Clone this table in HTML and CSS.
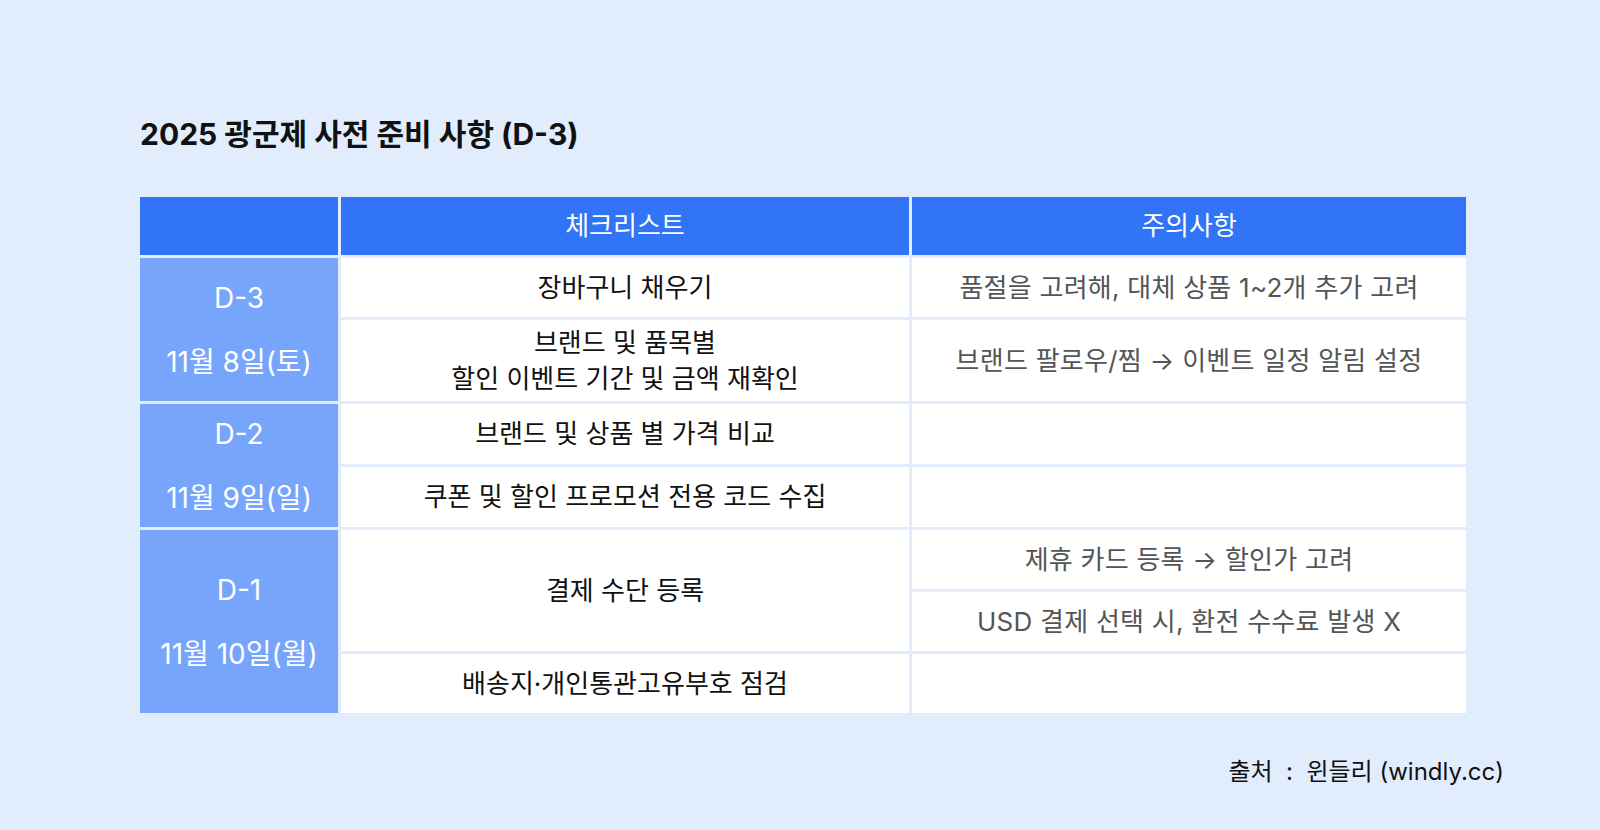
FILE: index.html
```html
<!DOCTYPE html>
<html lang="ko">
<head>
<meta charset="utf-8">
<title>2025 광군제 사전 준비 사항 (D-3)</title>
<link rel="stylesheet" href="styles.css">
</head>
<body>
<main class="page">
  <h1 class="title">2025 광군제 사전 준비 사항 (D-3)</h1>
  <div class="table">
    <div class="cell head"></div>
    <div class="cell head">체크리스트</div>
    <div class="cell head">주의사항</div>

    <div class="cell day span2"><span>D-3</span><span>11월 8일(토)</span></div>
    <div class="cell task">장바구니 채우기</div>
    <div class="cell note">품절을 고려해, 대체 상품 1~2개 추가 고려</div>
    <div class="cell task">브랜드 및 품목별<br>할인 이벤트 기간 및 금액 재확인</div>
    <div class="cell note">브랜드 팔로우/찜 → 이벤트 일정 알림 설정</div>

    <div class="cell day span2"><span>D-2</span><span>11월 9일(일)</span></div>
    <div class="cell task">브랜드 및 상품 별 가격 비교</div>
    <div class="cell note"></div>
    <div class="cell task">쿠폰 및 할인 프로모션 전용 코드 수집</div>
    <div class="cell note"></div>

    <div class="cell day span3"><span>D-1</span><span>11월 10일(월)</span></div>
    <div class="cell task span2">결제 수단 등록</div>
    <div class="cell note">제휴 카드 등록 → 할인가 고려</div>
    <div class="cell note">USD 결제 선택 시, 환전 수수료 발생 X</div>
    <div class="cell task">배송지·개인통관고유부호 점검</div>
    <div class="cell note"></div>
  </div>
  <p class="source">출처 &nbsp;:&nbsp; 윈들리 (windly.cc)</p>
</main>
</body>
</html>
```

FILE: styles.css
```css
* { box-sizing: border-box; }
html, body {
  margin: 0;
  padding: 0;
  background: #e1edfd;
}
body {
  font-family: "Inter", "Noto Sans CJK KR", sans-serif;
  color: #111;
}
.page {
  width: 1600px;
  height: 830px;
  padding: 116px 96px 0 140px;
}
.title {
  margin: 0;
  font-size: 30px;
  line-height: 36px;
  font-weight: 700;
  color: #111;
  letter-spacing: 0;
}
.table {
  margin-top: 45px;
  width: 1326px;
  display: grid;
  grid-template-columns: 198px 568px 554px;
  grid-template-rows: 58px 59px 81px 60px 60px 59px 59px 59px;
  gap: 3px;
}
.cell {
  display: flex;
  align-items: center;
  justify-content: center;
  text-align: center;
  font-size: 26px;
  line-height: 36px;
  background: #fff;
  font-weight: 400;
  letter-spacing: 0;
}
.head {
  background: #3174f6;
  color: #fff;
}
.day {
  background: #77a5fc;
  color: #fff;
  flex-direction: column;
  gap: 28px;
  font-size: 28px;
}
.span2 { grid-row: span 2; }
.span3 { grid-row: span 3; }
.task { color: #111; }
.note { color: #555; letter-spacing: 0.25px; }
.source {
  margin: 43px 0 0;
  text-align: right;
  font-size: 24px;
  line-height: 32px;
  color: #111;
  font-weight: 400;
}
```
